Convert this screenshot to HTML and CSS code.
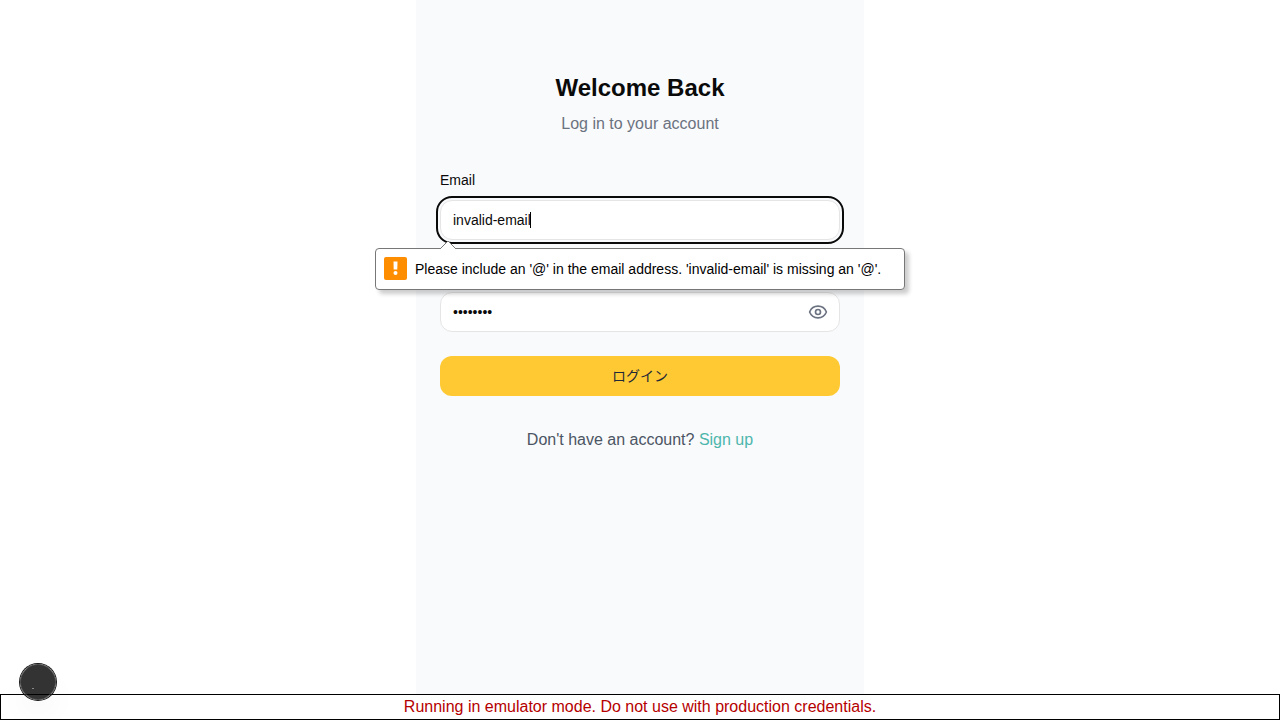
FILE: index.html
```html
<!DOCTYPE html>
<html lang="en">
<head>
<meta charset="utf-8">
<title>Log in</title>
<link rel="stylesheet" href="styles.css">
</head>
<body>
<main class="panel">
  <header class="intro">
    <h1 class="title">Welcome Back</h1>
    <p class="subtitle">Log in to your account</p>
  </header>
  <form class="form" novalidate>
    <div class="field">
      <label class="label" for="email">Email</label>
      <div class="control">
        <input class="input input-active" id="email" type="email" value="invalid-email" aria-describedby="email-error">
        <span class="caret"></span>
        <div class="bubble" id="email-error" role="alert">
          <svg class="bubble-arrow" width="18" height="9" viewBox="0 0 18 9"><path d="M1 9 9 1l8 8" fill="#fff" stroke="#777"/></svg>
          <svg class="bubble-icon" width="23" height="23" viewBox="0 0 23 23"><rect width="23" height="23" rx="2" fill="#ff8d00"/><path d="M9.5 4.5h4l-.2 8H9.7z" fill="#fff"/><circle cx="11.5" cy="16" r="2" fill="#fff"/></svg>
          <span>Please include an '@' in the email address. 'invalid-email' is missing an '@'.</span>
        </div>
      </div>
    </div>
    <div class="field">
      <label class="label" for="password">Password</label>
      <div class="control">
        <input class="input input-password" id="password" type="password" value="password">
        <button class="reveal" type="button" aria-label="Show password">
          <svg width="20" height="20" viewBox="0 0 24 24" fill="none" stroke="currentColor" stroke-width="2" stroke-linecap="round" stroke-linejoin="round"><path d="M2.06 12.35a1 1 0 0 1 0-.7 10.75 10.75 0 0 1 19.88 0 1 1 0 0 1 0 .7 10.75 10.75 0 0 1-19.88 0"/><circle cx="12" cy="12" r="3"/></svg>
        </button>
      </div>
    </div>
    <button class="submit" type="submit" lang="ja">ログイン</button>
  </form>
  <p class="signup">Don't have an account? <a class="link" href="#signup">Sign up</a></p>
</main>
<footer class="banner">Running in emulator mode. Do not use with production credentials.</footer>
<button class="devtools" type="button" aria-label="Developer tools"><span class="devtools-mark"></span></button>
</body>
</html>
```
FILE: styles.css
```css
* {
  box-sizing: border-box;
}

body {
  margin: 0;
  min-height: 100vh;
  background: #fff;
  color: #0a0a0a;
  font: 16px/24px "Liberation Sans", Arial, "Noto Sans CJK JP", sans-serif;
}

.panel {
  max-width: 448px;
  min-height: 100vh;
  margin: 0 auto;
  padding: 72px 24px 48px;
  background: #f9fafc;
}

.intro {
  margin-bottom: 36px;
  text-align: center;
}

.title {
  margin: 0 0 8px;
  font-size: 24px;
  line-height: 32px;
}

.subtitle {
  margin: 0;
  color: #6b7280;
}

.form {
  display: flex;
  flex-direction: column;
  gap: 24px;
}

.field {
  display: flex;
  flex-direction: column;
  gap: 12px;
}

.label {
  font-size: 14px;
  line-height: 16px;
}

.control {
  position: relative;
}

.input {
  display: block;
  width: 100%;
  height: 40px;
  padding: 8px 12px;
  border: 1px solid #e5e5e5;
  border-radius: 12px;
  background: #fff;
  color: #0a0a0a;
  font: inherit;
  font-size: 14px;
  line-height: 20px;
}

.input-active {
  outline: 2px solid #0a0a0a;
  outline-offset: 2px;
}

.input-password {
  padding-right: 40px;
}

.caret {
  position: absolute;
  top: 12px;
  left: 90px;
  width: 1px;
  height: 16px;
  background: #000;
}

.bubble {
  position: absolute;
  z-index: 1;
  top: 48px;
  left: 50%;
  display: flex;
  align-items: flex-start;
  gap: 8px;
  width: 530px;
  padding: 8px;
  border: 1px solid #777;
  border-radius: 4px;
  background: #fff;
  box-shadow: 4px 4px 4px rgba(0, 0, 0, 0.2);
  color: #000;
  font: 14px/24px "Liberation Sans", Arial, sans-serif;
  white-space: nowrap;
  transform: translateX(-50%);
}

.bubble-arrow {
  position: absolute;
  top: -9px;
  left: 63px;
}

.bubble-icon {
  flex: none;
}

.reveal {
  position: absolute;
  top: 10px;
  right: 12px;
  display: flex;
  padding: 0;
  border: 0;
  background: none;
  color: #6b7280;
}

.submit {
  height: 40px;
  padding: 0 0 2px;
  border: 0;
  border-radius: 12px;
  background: #ffc933;
  color: #1f2937;
  font: 14px/20px "Noto Sans CJK JP", sans-serif;
}

.signup {
  margin: 32px 0 0;
  color: #4b5563;
  text-align: center;
}

.link {
  color: #4db6ac;
  text-decoration: none;
}

.banner {
  position: fixed;
  right: 0;
  bottom: 0;
  left: 0;
  border: 1px solid #000;
  background: #fff;
  color: #b50000;
  text-align: center;
}

.devtools {
  position: fixed;
  bottom: 20px;
  left: 20px;
  width: 36px;
  height: 36px;
  padding: 0;
  border: 1px solid #4a4a4a;
  border-radius: 50%;
  background: rgba(0, 0, 0, 0.8);
  box-shadow: 0 0 0 1px #171717, 0 16px 32px -8px rgba(0, 0, 0, 0.1);
}

.devtools-mark {
  position: absolute;
  top: 23px;
  left: 11px;
  width: 2px;
  height: 1px;
  background: #888;
}
```
